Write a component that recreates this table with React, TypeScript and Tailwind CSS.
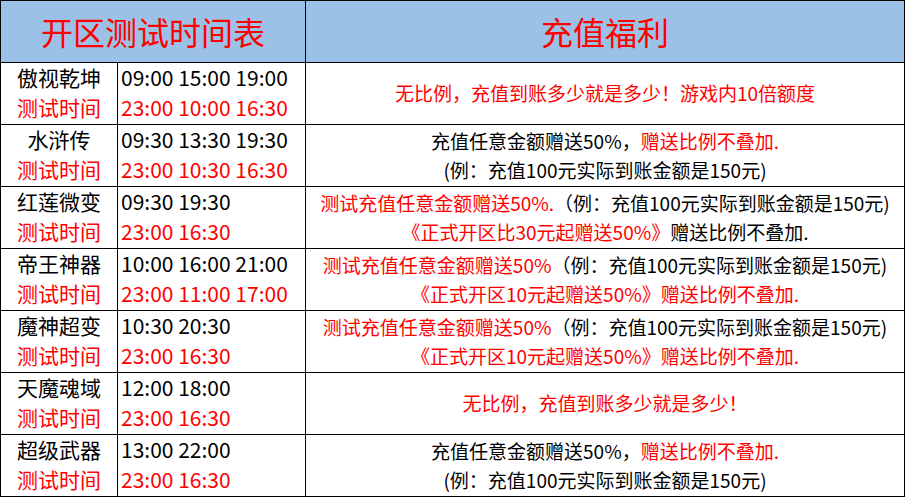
import React from "react";

const R = ({ children }: { children: React.ReactNode }) => (
  <span className="text-[#ff0000]">{children}</span>
);
const B = ({ children }: { children: React.ReactNode }) => (
  <span className="text-black">{children}</span>
);

type Row = {
  name: string;
  times: string;
  test: string;
  benefit: React.ReactNode;
};

const typeA = (
  <>
    <div>
      <B>充值任意金额赠送50%，</B>
      <R>赠送比例不叠加.</R>
    </div>
    <div>
      <B>(例：充值100元实际到账金额是150元)</B>
    </div>
  </>
);

const typeC = (
  <>
    <div>
      <R>测试充值任意金额赠送50%</R>
      <B>（例：充值100元实际到账金额是150元)</B>
    </div>
    <div>
      <R>《正式开区10元起赠送50%》赠送比例不叠加.</R>
    </div>
  </>
);

const rows: Row[] = [
  {
    name: "傲视乾坤",
    times: "09:00 15:00 19:00",
    test: "23:00 10:00 16:30",
    benefit: (
      <div>
        <R>无比例，充值到账多少就是多少！游戏内10倍额度</R>
      </div>
    ),
  },
  {
    name: "水浒传",
    times: "09:30 13:30 19:30",
    test: "23:00 10:30 16:30",
    benefit: typeA,
  },
  {
    name: "红莲微变",
    times: "09:30 19:30",
    test: "23:00 16:30",
    benefit: (
      <>
        <div>
          <R>测试充值任意金额赠送50%.</R>
          <B>（例：充值100元实际到账金额是150元)</B>
        </div>
        <div>
          <R>《正式开区比30元起赠送50%》</R>
          <B>赠送比例不叠加.</B>
        </div>
      </>
    ),
  },
  {
    name: "帝王神器",
    times: "10:00 16:00 21:00",
    test: "23:00 11:00 17:00",
    benefit: typeC,
  },
  {
    name: "魔神超变",
    times: "10:30 20:30",
    test: "23:00 16:30",
    benefit: typeC,
  },
  {
    name: "天魔魂域",
    times: "12:00 18:00",
    test: "23:00 16:30",
    benefit: (
      <div>
        <R>无比例，充值到账多少就是多少！</R>
      </div>
    ),
  },
  {
    name: "超级武器",
    times: "13:00 22:00",
    test: "23:00 16:30",
    benefit: typeA,
  },
];

export default function App() {
  return (
    <div
      className="w-[905px] h-[497px] bg-black p-px grid grid-cols-[116px_187px_598px] grid-rows-[repeat(8,61px)] gap-px"
      style={{ fontFamily: '"Noto Sans CJK SC", "Noto Sans", sans-serif' }}
    >
      <div className="col-span-2 bg-[#9bc2e6] flex items-center justify-center pb-[2px] text-[#ff0000] text-[32px] leading-none">
        开区测试时间表
      </div>
      <div className="bg-[#9bc2e6] flex items-center justify-center pb-[2px] text-[#ff0000] text-[32px] leading-none">
        充值福利
      </div>
      {rows.map((r) => (
        <React.Fragment key={r.name}>
          <div className="bg-white flex flex-col items-center justify-center pb-[3px] text-[21px] leading-[30px]">
            <div className="text-black">{r.name}</div>
            <div className="text-[#ff0000]">测试时间</div>
          </div>
          <div className="bg-white flex flex-col justify-center pl-[3px] pb-[3px] text-[21px] leading-[30px] whitespace-nowrap">
            <div className="text-black">{r.times}</div>
            <div className="text-[#ff0000]">{r.test}</div>
          </div>
          <div className="bg-white flex flex-col items-center justify-center pb-[2px] text-center text-[19px] leading-[29px] whitespace-nowrap">
            {r.benefit}
          </div>
        </React.Fragment>
      ))}
    </div>
  );
}
